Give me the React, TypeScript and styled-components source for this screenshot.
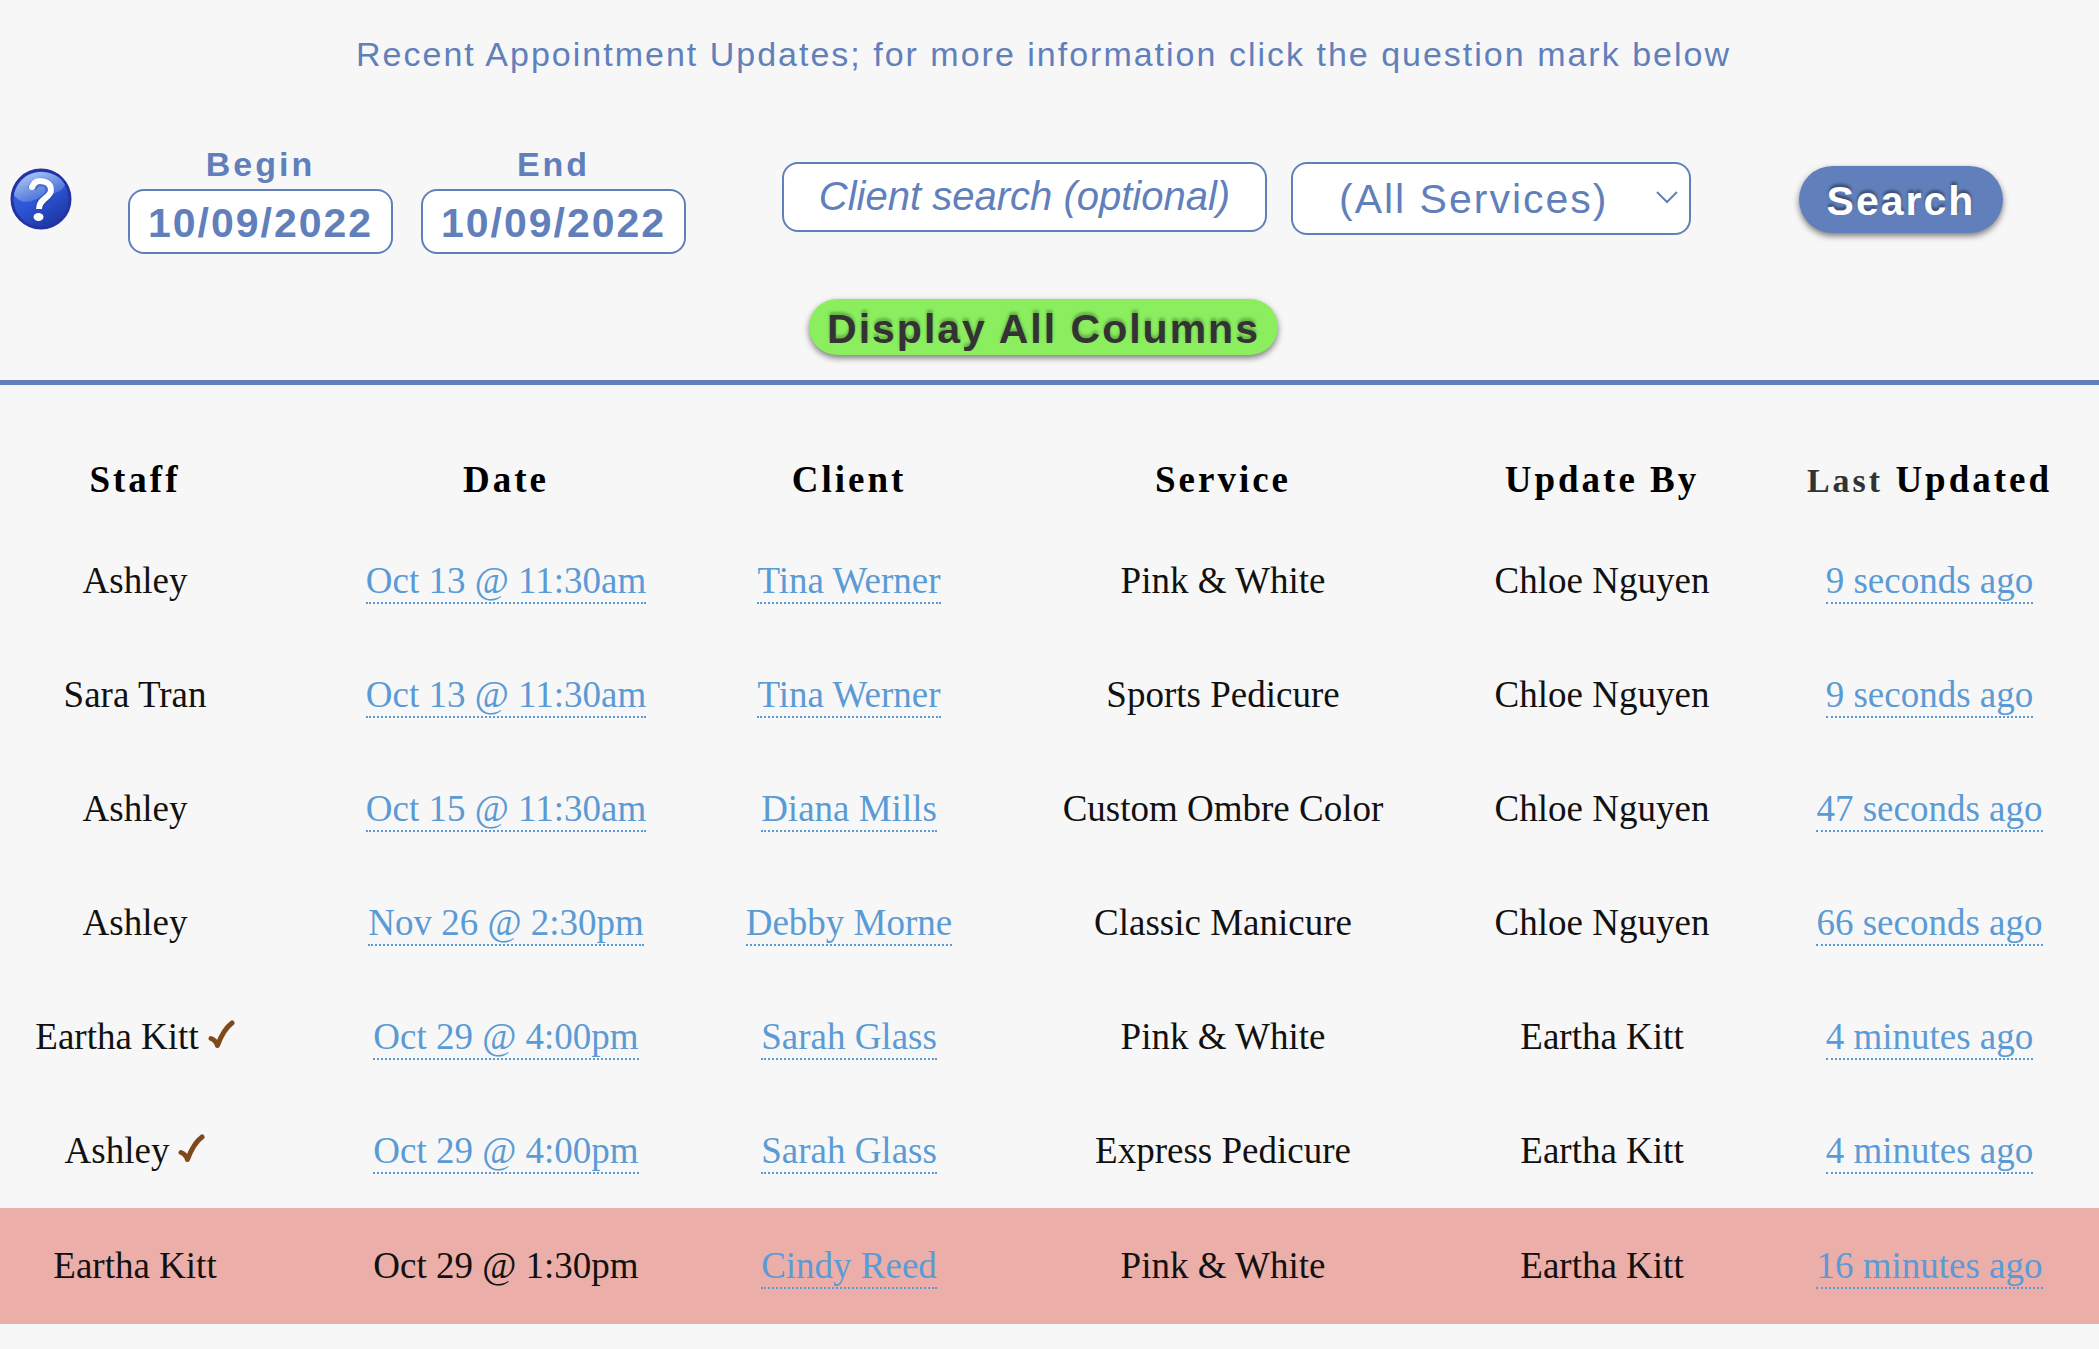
import React from "react";
import styled, { createGlobalStyle, css } from "styled-components";

const colors = {
  page: "#f7f7f7",
  blue: "#6180bb",
  link: "#5b9bd5",
  green: "#8aee5f",
  cancelled: "#ecaea9",
  check: "#80491a",
};

const GlobalStyle = createGlobalStyle`
  *, *::before, *::after { box-sizing: border-box; }
  body {
    margin: 0;
    background: ${colors.page};
    color: #111;
    font-family: "Liberation Sans", Arial, sans-serif;
  }
`;

const Header = styled.header`
  padding: 34px 0 25px;
  border-bottom: 5px solid ${colors.blue};
`;

const Title = styled.h1`
  margin: 0 0 70px;
  padding-right: 12px;
  color: ${colors.blue};
  font-size: 34px;
  font-weight: 400;
  line-height: 40px;
  letter-spacing: 2px;
  text-align: center;
`;

const Filters = styled.form`
  display: grid;
  grid-template-columns: 62px 598fr 961fr 204px;
  column-gap: 56px;
  align-items: center;
  padding: 0 96px 0 10px;
`;

const HelpButton = styled.button`
  width: 62px;
  height: 62px;
  padding: 0;
  border: 0;
  background: none;
  cursor: pointer;

  svg {
    display: block;
  }
`;

const Dates = styled.div`
  display: grid;
  grid-template-columns: 1fr 1fr;
  gap: 28px;
  padding-right: 40px;
`;

const DateField = styled.label`
  display: grid;
  gap: 5px;
  color: ${colors.blue};
  font-size: 34px;
  font-weight: 700;
  line-height: 40px;
  letter-spacing: 3px;
  text-align: center;
`;

const control = css`
  width: 100%;
  min-width: 0;
  margin: 0;
  border: 2px solid ${colors.blue};
  border-radius: 16px;
  background: #fff;
  color: ${colors.blue};
  font-family: inherit;
  font-size: 41px;
`;

const DateInput = styled.input`
  ${control}
  height: 65px;
  padding: 4px 0 0;
  font-weight: 700;
  letter-spacing: 2px;
  text-align: center;
`;

const Criteria = styled.div`
  display: grid;
  grid-template-columns: 485fr 400fr;
  column-gap: 24px;
  align-items: start;
  padding: 0 52px 2px 0;
`;

const ClientInput = styled.input`
  ${control}
  height: 70px;
  padding: 0;
  font-size: 40px;
  text-align: center;

  &::placeholder {
    color: ${colors.blue};
    font-style: italic;
    opacity: 1;
  }
`;

const SelectBox = styled.div`
  display: grid;
  align-items: center;

  > * {
    grid-area: 1 / 1;
  }

  svg {
    justify-self: end;
    margin-right: 12px;
    pointer-events: none;
  }
`;

const ServiceSelect = styled.select`
  ${control}
  height: 73px;
  padding: 2px 46px 0;
  appearance: none;
  letter-spacing: 2px;
`;

const PillButton = styled.button<{ $variant: "search" | "columns" }>`
  height: ${(p) => (p.$variant === "search" ? 67 : 56)}px;
  padding: 4px 18px 0;
  border: 0;
  border-radius: 34px;
  background: ${(p) => (p.$variant === "search" ? colors.blue : colors.green)};
  color: ${(p) => (p.$variant === "search" ? "#fff" : "#333")};
  box-shadow: 0 3px 6px rgba(0, 0, 0, 0.5);
  font-family: inherit;
  font-size: 41px;
  font-weight: 700;
  letter-spacing: 2px;
  line-height: 46px;
  text-shadow: 0 -3px 3px rgba(0, 0, 0, ${(p) => (p.$variant === "search" ? 0.4 : 0.25)});
  white-space: nowrap;
  cursor: pointer;
`;

const ColumnsBar = styled.div`
  display: flex;
  justify-content: center;
  padding: 45px 12px 0 0;
`;

const Table = styled.table`
  width: 100%;
  border-collapse: collapse;
  table-layout: fixed;
  font-family: Georgia, "Liberation Serif", serif;
  font-size: 37px;
  line-height: 44px;
  text-align: center;
  white-space: nowrap;
`;

const Col = styled.col<{ $w: number }>`
  width: ${(p) => p.$w}px;
`;

const HeadCell = styled.th`
  height: 139px;
  padding: 51px 0 0;
  color: #000;
  font-size: 37px;
  font-weight: 700;
  letter-spacing: 3px;

  &:last-child {
    padding-left: 46px;
  }
`;

const Muted = styled.span`
  color: #333;
  font-size: 34px;
`;

const Row = styled.tr<{ $cancelled?: boolean }>`
  height: ${(p) => (p.$cancelled ? 116 : 114)}px;
  background: ${(p) => (p.$cancelled ? colors.cancelled : "transparent")};
`;

const Cell = styled.td`
  padding: 0;

  &:last-child {
    padding-left: 46px;
  }
`;

const DottedLink = styled.a`
  padding-bottom: 1px;
  border-bottom: 2px dotted ${colors.link};
  color: ${colors.link};
  text-decoration: none;
`;

const Check = styled.svg`
  margin-left: 9px;
`;

const HelpIcon = () => (
  <svg width="62" height="62" viewBox="0 0 62 62" aria-hidden="true">
    <defs>
      <linearGradient id="ball" x1="0" y1="0" x2="0.6" y2="1">
        <stop offset="0" stopColor="#3d6be0" />
        <stop offset="0.55" stopColor="#2d57d8" />
        <stop offset="1" stopColor="#1f37a6" />
      </linearGradient>
      <linearGradient id="gloss" x1="0.1" y1="0" x2="0.8" y2="1">
        <stop offset="0" stopColor="#b4d0fb" />
        <stop offset="1" stopColor="#345cd0" />
      </linearGradient>
    </defs>
    <circle cx="31" cy="31" r="29" fill="url(#ball)" stroke="#2432a4" strokeWidth="3" />
    <path d="M4 27C7 13 18 4 31 4c11 0 20 5 24 13C49 28 39 24 29 30 20 35 10 36 4 27z" fill="url(#gloss)" />
    <path d="M22 21q2-7 9-7 9 0 9 9c0 8-11 8-11 18" fill="none" stroke="#1c3aa0" strokeWidth="9" opacity="0.4" />
    <path d="M22 20c1-5 4-7 8-7 7 0 11 3 11 9 0 8-12 8-12 19" fill="none" stroke="#fff" strokeWidth="6" strokeLinejoin="round" />
    <circle cx="22" cy="19" r="3" fill="#fff" />
    <ellipse cx="28.5" cy="49" rx="5" ry="4" fill="#fff" />
  </svg>
);

const Chevron = () => (
  <svg width="24" height="16" viewBox="0 0 24 16" aria-hidden="true">
    <path d="M2 2l10 10L22 2" fill="none" stroke={colors.blue} strokeWidth="2" />
  </svg>
);

const CheckMark = () => (
  <Check width="27" height="29" viewBox="0 0 27 29" role="img" aria-label="confirmed">
    <path
      d="M3 18.5c3 1 5 3 6.5 7C13 16 17 8 24 3"
      fill="none"
      stroke={colors.check}
      strokeWidth="5"
      strokeLinecap="round"
      strokeLinejoin="round"
    />
  </Check>
);

const columnWidths = [270, 472, 214, 534, 224, 385];

type Update = {
  staff: string;
  date: string;
  client: string;
  service: string;
  by: string;
  ago: string;
  confirmed?: boolean;
  cancelled?: boolean;
};

const updates: Update[] = [
  { staff: "Ashley", date: "Oct 13 @ 11:30am", client: "Tina Werner", service: "Pink & White", by: "Chloe Nguyen", ago: "9 seconds ago" },
  { staff: "Sara Tran", date: "Oct 13 @ 11:30am", client: "Tina Werner", service: "Sports Pedicure", by: "Chloe Nguyen", ago: "9 seconds ago" },
  { staff: "Ashley", date: "Oct 15 @ 11:30am", client: "Diana Mills", service: "Custom Ombre Color", by: "Chloe Nguyen", ago: "47 seconds ago" },
  { staff: "Ashley", date: "Nov 26 @ 2:30pm", client: "Debby Morne", service: "Classic Manicure", by: "Chloe Nguyen", ago: "66 seconds ago" },
  { staff: "Eartha Kitt", date: "Oct 29 @ 4:00pm", client: "Sarah Glass", service: "Pink & White", by: "Eartha Kitt", ago: "4 minutes ago", confirmed: true },
  { staff: "Ashley", date: "Oct 29 @ 4:00pm", client: "Sarah Glass", service: "Express Pedicure", by: "Eartha Kitt", ago: "4 minutes ago", confirmed: true },
  { staff: "Eartha Kitt", date: "Oct 29 @ 1:30pm", client: "Cindy Reed", service: "Pink & White", by: "Eartha Kitt", ago: "16 minutes ago", cancelled: true },
];

export default function App() {
  return (
    <>
      <GlobalStyle />
      <Header>
        <Title>Recent Appointment Updates; for more information click the question mark below</Title>
        <Filters onSubmit={(e) => e.preventDefault()}>
          <HelpButton type="button" aria-label="Help">
            <HelpIcon />
          </HelpButton>
          <Dates>
            <DateField>
              Begin
              <DateInput type="text" defaultValue="10/09/2022" />
            </DateField>
            <DateField>
              End
              <DateInput type="text" defaultValue="10/09/2022" />
            </DateField>
          </Dates>
          <Criteria>
            <ClientInput type="text" aria-label="Client search" placeholder="Client search (optional)" />
            <SelectBox>
              <ServiceSelect aria-label="Service">
                <option>(All Services)</option>
              </ServiceSelect>
              <Chevron />
            </SelectBox>
          </Criteria>
          <PillButton type="submit" $variant="search">Search</PillButton>
        </Filters>
        <ColumnsBar>
          <PillButton type="button" $variant="columns">Display All Columns</PillButton>
        </ColumnsBar>
      </Header>
      <main>
        <Table>
          <colgroup>
            {columnWidths.map((w, i) => (
              <Col key={i} $w={w} />
            ))}
          </colgroup>
          <thead>
            <tr>
              <HeadCell scope="col">Staff</HeadCell>
              <HeadCell scope="col">Date</HeadCell>
              <HeadCell scope="col">Client</HeadCell>
              <HeadCell scope="col">Service</HeadCell>
              <HeadCell scope="col">Update By</HeadCell>
              <HeadCell scope="col">
                <Muted>Last</Muted> Updated
              </HeadCell>
            </tr>
          </thead>
          <tbody>
            {updates.map((u, i) => (
              <Row key={i} $cancelled={u.cancelled}>
                <Cell>
                  {u.staff}
                  {u.confirmed && <CheckMark />}
                </Cell>
                <Cell>{u.cancelled ? u.date : <DottedLink href="#">{u.date}</DottedLink>}</Cell>
                <Cell>
                  <DottedLink href="#">{u.client}</DottedLink>
                </Cell>
                <Cell>{u.service}</Cell>
                <Cell>{u.by}</Cell>
                <Cell>
                  <DottedLink href="#">{u.ago}</DottedLink>
                </Cell>
              </Row>
            ))}
          </tbody>
        </Table>
      </main>
    </>
  );
}
